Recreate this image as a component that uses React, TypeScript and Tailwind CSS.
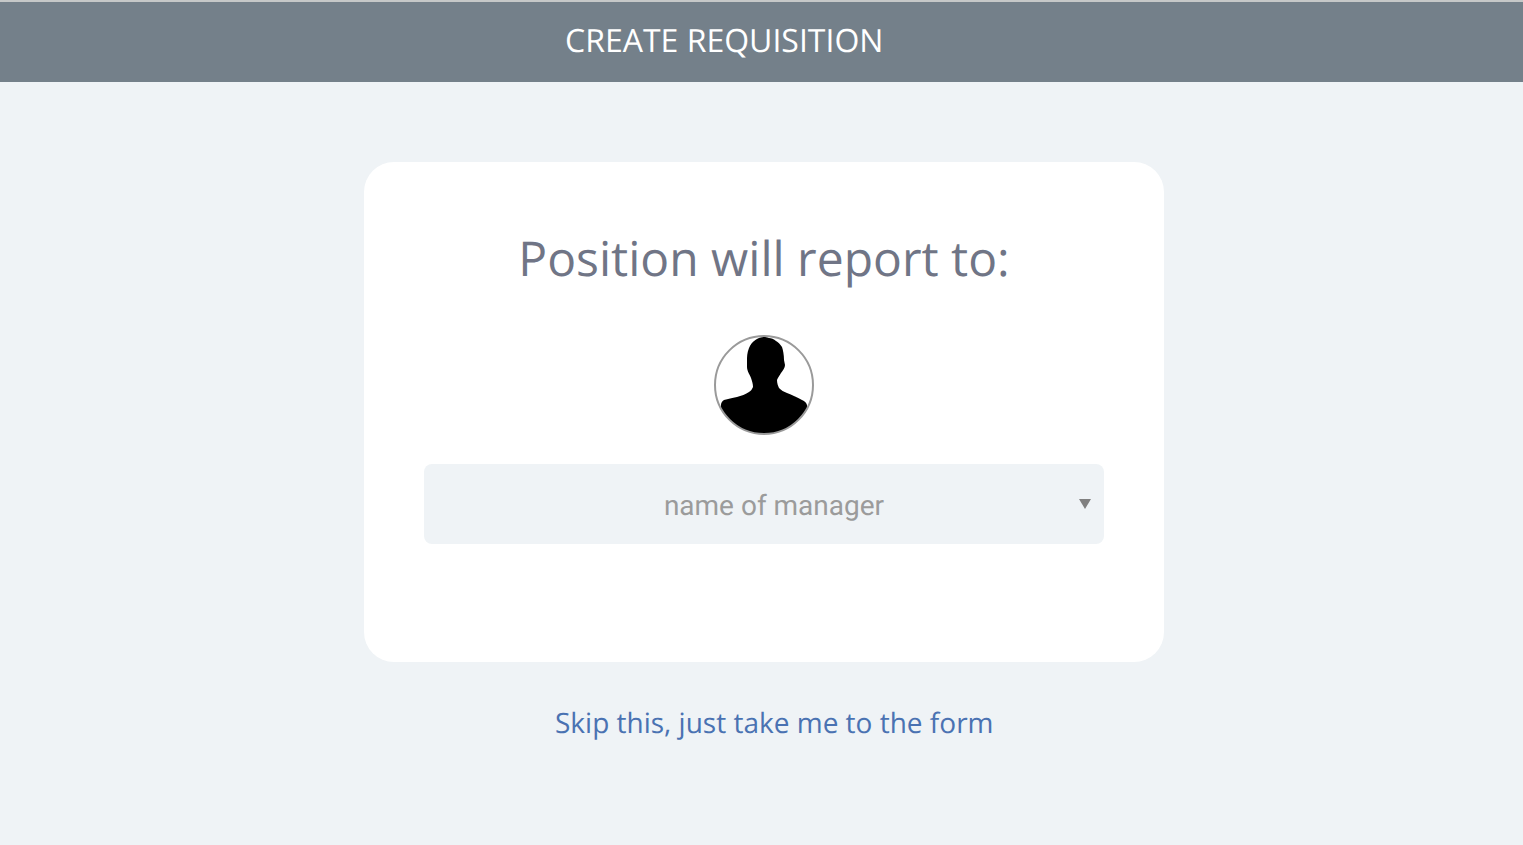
export default function App() {
  return (
    <div className="min-h-[845px] bg-[#eff3f6] font-['Open_Sans','Noto_Sans',sans-serif] [text-rendering:geometricPrecision]">
      <header className="h-[82px] border-t-2 border-[#c6c8c8] bg-[#74808a] flex items-center">
        <h1 className="ml-[565px] -mt-0.5 text-[32px] leading-none font-normal text-white">CREATE REQUISITION</h1>
      </header>
      <main className="flex flex-col items-start pl-[364px] pt-20">
        <section className="w-[800px] h-[500px] rounded-[30px] bg-white px-[60px] flex flex-col items-center">
          <h2 className="mt-[66px] h-[62px] text-[48px] leading-[62px] font-normal text-[#707586]">Position will report to:</h2>
          <svg viewBox="0 0 100 100" className="mt-[45px] w-[100px] h-[100px]" aria-hidden="true">
            <defs>
              <clipPath id="avatar-clip"><circle cx="50" cy="50" r="49" /></clipPath>
            </defs>
            <circle cx="50" cy="50" r="49" fill="#fff" />
            <path
              clipPath="url(#avatar-clip)"
              fill="#000"
              d="M50 2 C44 2 38 6 35 13 C33 18 33 22 33 25 L33 32 C33 36 36 40 37 43 C38 46 39 49 39 52 C38 54 37 56 35 57 C32 59 27 61 23 62 C18 63 14 64 10 65 C8 66 7 68 7 70 L7 100 L93 100 L93 70 C92 67 90 66 88 65 C83 62 78 60 73 58 C70 57 67 55 65 53 C64 51 63 48 63 45 C64 42 66 40 67 38 C69 35 71 33 71 30 L70 25 C70 20 69 15 68 12 C66 9 64 7 62 6 C60 4 57 3 55 3 C53 2 52 2 50 2 Z"
            />
            <circle cx="50" cy="50" r="49" fill="none" stroke="#9a9a9a" strokeWidth="2" />
          </svg>
          <div className="relative mt-[29px] w-[680px] h-20 rounded-lg bg-[#eff3f6] flex items-center justify-center">
            <span className="ml-5 mt-1 font-['Roboto',sans-serif] text-[28px] text-[#9b9b9b]">name of manager</span>
            <svg viewBox="0 0 12 10" className="absolute right-[13px] top-[35px] w-3 h-2.5" aria-hidden="true">
              <path d="M0 0 H12 L6 10 Z" fill="#808080" />
            </svg>
          </div>
        </section>
        <a className="mt-[43px] ml-[191px] text-[28px] leading-[37px] text-[#4a72b2]">Skip this, just take me to the form</a>
      </main>
    </div>
  );
}
